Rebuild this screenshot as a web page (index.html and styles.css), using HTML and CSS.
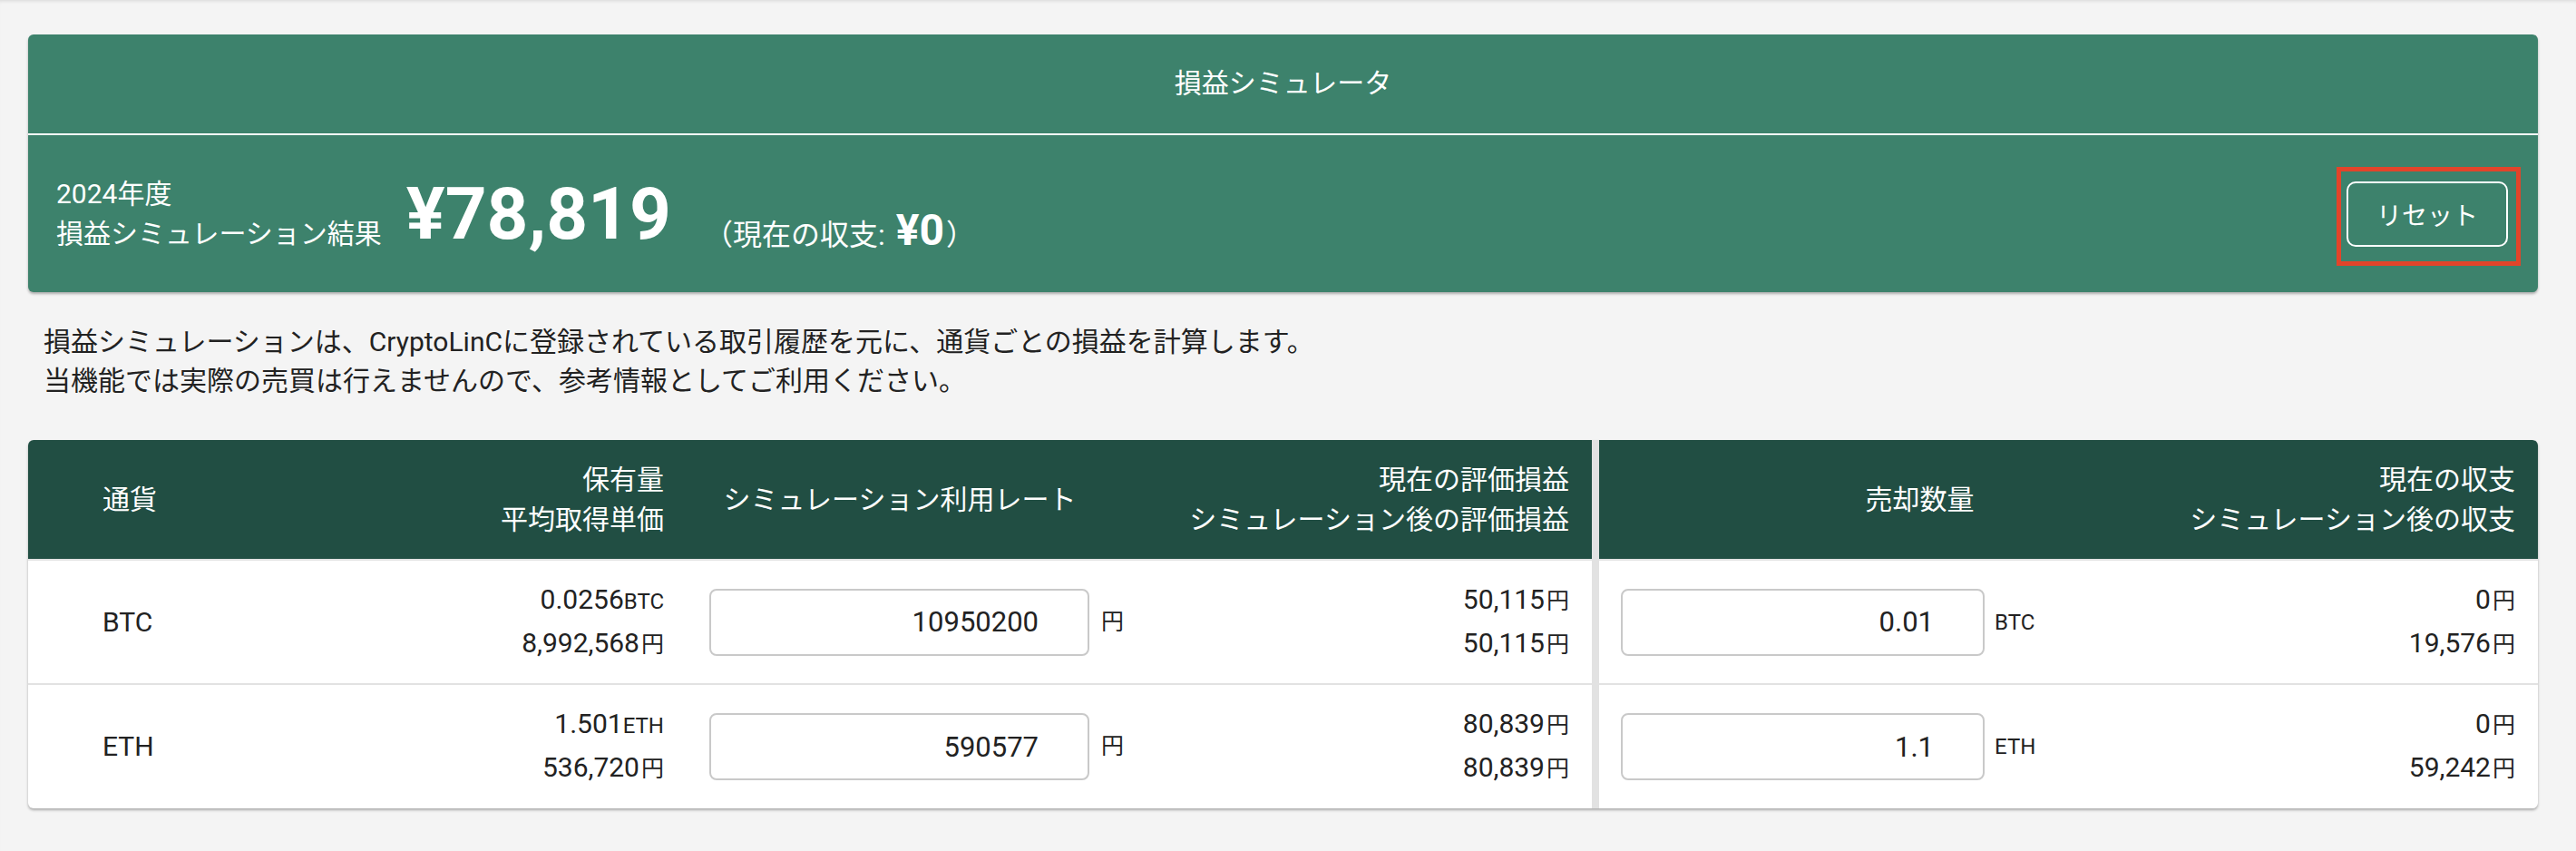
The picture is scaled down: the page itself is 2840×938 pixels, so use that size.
FILE: index.html
```html
<!DOCTYPE html>
<html lang="ja">
<head>
    <meta charset="UTF-8">
    <meta name="viewport" content="width=device-width, initial-scale=1.0">
    <title>損益シミュレータ</title>
    <link rel="stylesheet" href="styles.css">
</head>
<body>
<div class="page">

    <!-- 結果 -->
    <section class="summary-card">
        <h1 class="summary-title">損益シミュレータ</h1>
        <div class="summary-body">
            <div class="summary-label">
                <div>2024年度</div>
                <div>損益シミュレーション結果</div>
            </div>
            <div class="summary-total">¥78,819</div>
            <div class="summary-current">（現在の収支:<b>¥0</b>）</div>
            <div class="reset-wrap">
                <button type="button" class="reset-button">リセット</button>
            </div>
        </div>
    </section>

    <p class="note">損益シミュレーションは、CryptoLinCに登録されている取引履歴を元に、通貨ごとの損益を計算します。<br>当機能では実際の売買は行えませんので、参考情報としてご利用ください。</p>

    <!-- テーブル -->
    <div class="sim-table">
        <div class="sim-row sim-head">
            <div class="cell c-name">通貨</div>
            <div class="cell c-right">保有量<br>平均取得単価</div>
            <div class="cell c-center">シミュレーション利用レート</div>
            <div class="cell c-right">現在の評価損益<br>シミュレーション後の評価損益</div>
            <div class="cell c-sell-head">売却数量</div>
            <div class="cell c-right">現在の収支<br>シミュレーション後の収支</div>
        </div>

        <div class="sim-row">
            <div class="cell c-name">BTC</div>
            <div class="cell c-right">
                <div>0.0256<span class="unit-coin">BTC</span></div>
                <div>8,992,568<span class="unit-yen">円</span></div>
            </div>
            <div class="cell c-input">
                <input type="text" class="num-input rate-input" value="10950200">
                <span class="unit-yen">円</span>
            </div>
            <div class="cell c-right">
                <div>50,115<span class="unit-yen">円</span></div>
                <div>50,115<span class="unit-yen">円</span></div>
            </div>
            <div class="cell c-input c-sell">
                <input type="text" class="num-input sell-input" value="0.01">
                <span class="unit-coin">BTC</span>
            </div>
            <div class="cell c-right">
                <div>0<span class="unit-yen">円</span></div>
                <div>19,576<span class="unit-yen">円</span></div>
            </div>
        </div>

        <div class="sim-row">
            <div class="cell c-name">ETH</div>
            <div class="cell c-right">
                <div>1.501<span class="unit-coin">ETH</span></div>
                <div>536,720<span class="unit-yen">円</span></div>
            </div>
            <div class="cell c-input">
                <input type="text" class="num-input rate-input" value="590577">
                <span class="unit-yen">円</span>
            </div>
            <div class="cell c-right">
                <div>80,839<span class="unit-yen">円</span></div>
                <div>80,839<span class="unit-yen">円</span></div>
            </div>
            <div class="cell c-input c-sell">
                <input type="text" class="num-input sell-input" value="1.1">
                <span class="unit-coin">ETH</span>
            </div>
            <div class="cell c-right">
                <div>0<span class="unit-yen">円</span></div>
                <div>59,242<span class="unit-yen">円</span></div>
            </div>
        </div>
    </div>

</div>
</body>
</html>
```

FILE: styles.css
```css
* {
    margin: 0;
    padding: 0;
    box-sizing: border-box;
}

body {
    font-family: Roboto, "Noto Sans CJK JP", sans-serif;
    background-color: #f4f4f4;
    color: #222;
}

.page {
    min-height: 100vh;
    padding: 38px 42px 0 31px;
    box-shadow: inset 0 4px 4px -3px rgba(0, 0, 0, 0.12);
}

/* 結果カード */
.summary-card {
    background-color: #3d826c;
    color: #fff;
    border-radius: 6px;
    box-shadow: 0 2px 3px rgba(0, 0, 0, 0.3);
}

.summary-title {
    height: 111px;
    line-height: 107px;
    text-align: center;
    font-size: 30px;
    font-weight: 400;
    border-bottom: 2px solid #fff;
}

.summary-body {
    display: flex;
    align-items: center;
    height: 173px;
    padding: 0 33px 0 31px;
}

.summary-label {
    font-size: 30px;
    line-height: 44px;
}

.summary-total {
    margin-left: 27px;
    font-size: 80px;
    font-weight: 700;
    line-height: 1;
}

.summary-current {
    margin-left: 36px;
    margin-top: 40px;
    font-size: 32px;
    line-height: 44px;
}

.summary-current b {
    margin-left: 12px;
    margin-right: 2px;
    font-size: 48px;
    font-weight: 700;
    line-height: 1;
}

.reset-wrap {
    margin-left: auto;
    position: relative;
}

/* 赤枠 */
.reset-wrap::after {
    content: "";
    position: absolute;
    left: -11px;
    right: -14px;
    top: -16px;
    bottom: -21px;
    border: 5px solid #e2442a;
}

.reset-button {
    width: 178px;
    height: 72px;
    background: transparent;
    color: #fff;
    border: 2px solid #fff;
    border-radius: 10px;
    font-family: inherit;
    font-size: 28px;
    cursor: pointer;
}

.note {
    padding: 33px 17px 44px;
    font-size: 30px;
    line-height: 43px;
}

/* テーブル */
.sim-table {
    background-color: #fff;
    border-radius: 6px;
    overflow: hidden;
    box-shadow: 0 2px 3px rgba(0, 0, 0, 0.3);
}

.sim-row {
    display: grid;
    grid-template-columns: 369px 357px 470px 528px 635px 408px;
    height: 137px;
    border-bottom: 2px solid #e2e2e2;
    font-size: 30px;
    line-height: 46px;
}

.sim-row:last-child {
    height: 136px;
    border-bottom: none;
}

.sim-head {
    height: 133px;
    background-color: #214e43;
    color: #fff;
    line-height: 44px;
}

.cell {
    display: flex;
    flex-direction: column;
    justify-content: center;
    white-space: nowrap;
}

.c-name {
    padding-left: 82px;
}

.c-right {
    align-items: flex-end;
    text-align: right;
    padding-right: 25px;
}

.c-center {
    align-items: center;
}

.c-sell-head {
    align-items: center;
    padding-left: 80px;
    border-left: 8px solid #e2e2e2;
}

.c-input {
    flex-direction: row;
    justify-content: flex-start;
    align-items: center;
    padding-left: 25px;
}

.c-sell {
    padding-left: 24px;
    border-left: 8px solid #e2e2e2;
}

.num-input {
    height: 74px;
    padding-right: 54px;
    margin-right: 11px;
    border: 2px solid #c9c9c9;
    border-radius: 8px;
    font-family: inherit;
    font-size: 31px;
    color: #222;
    text-align: right;
    outline: none;
}

.rate-input {
    width: 419px;
}

.sell-input {
    width: 401px;
}

.unit-yen {
    margin-left: 2px;
    font-size: 25px;
}

.unit-coin {
    font-size: 24px;
}
```
